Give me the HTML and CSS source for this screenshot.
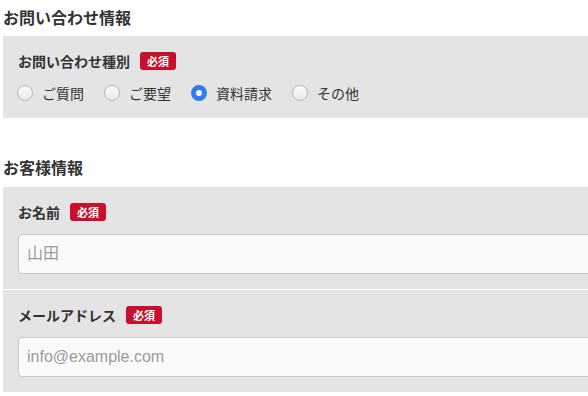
FILE: index.html
```html
<html>
<head>
<meta charset="utf-8">
<link rel="stylesheet" href="styles.css">
</head>
<body>

<div class="formPage">

  <h2 class="sectionTitle">お問い合わせ情報</h2>
  <div class="formBox">
    <div class="formRow">
      <div class="formLabel">お問い合わせ種別 <span class="required">必須</span></div>
      <div class="radioGroup">
        <label class="radioItem"><input type="radio" name="kind"> ご質問</label>
        <label class="radioItem"><input type="radio" name="kind"> ご要望</label>
        <label class="radioItem"><input type="radio" name="kind" checked> 資料請求</label>
        <label class="radioItem"><input type="radio" name="kind"> その他</label>
      </div>
    </div>
  </div>

  <h2 class="sectionTitle second">お客様情報</h2>
  <div class="formBox">
    <div class="formRow">
      <div class="formLabel">お名前 <span class="required">必須</span></div>
      <input class="textInput" type="text" placeholder="山田">
    </div>
    <div class="formRow">
      <div class="formLabel">メールアドレス <span class="required">必須</span></div>
      <input class="textInput" type="text" placeholder="info@example.com">
    </div>
  </div>

</div>

</body>
</html>
```

FILE: styles.css
```css
body {
  margin: 0;
  overflow: hidden;
  background: #ffffff;
  color: #333333;
  font-family: "Noto Sans CJK JP", "Noto Sans", sans-serif;
}

.formPage {
  width: 640px;
  padding: 5px 0 0 3px;
}

.sectionTitle {
  margin: 0 0 7px 0;
  font-size: 16px;
  line-height: 24px;
  font-weight: bold;
  color: #333333;
}

.sectionTitle.second {
  margin-top: 37px;
  margin-bottom: 8px;
}

.formBox {
  background-color: #e4e4e4;
}

.formRow {
  padding: 15px 0 15px 15px;
}

.formRow + .formRow {
  border-top: 1px solid #ffffff;
}

.formLabel {
  display: flex;
  align-items: center;
  height: 20px;
  font-size: 14px;
  font-weight: bold;
  color: #333333;
  margin-bottom: 12px;
}

.required {
  display: inline-block;
  margin-left: 10px;
  padding: 0 7px;
  height: 18px;
  line-height: 18px;
  border-radius: 3px;
  background-color: #c8102e;
  color: #ffffff;
  font-size: 11px;
  font-weight: bold;
}

.radioGroup {
  display: flex;
  align-items: center;
  height: 21px;
  margin-top: -1px;
  margin-left: -1px;
}

.radioItem {
  display: flex;
  align-items: center;
  font-size: 14px;
  color: #333333;
  margin-right: 20px;
}

.radioItem input {
  appearance: none;
  -webkit-appearance: none;
  width: 16px;
  height: 16px;
  margin: 0 9px 0 0;
  border-radius: 50%;
  border: 1px solid #b8b8b8;
  background: linear-gradient(#fdfdfd, #e9e9e9);
  box-sizing: border-box;
}

.radioItem input:checked {
  border: 5px solid #2f7cf0;
  background: #ffffff;
}

.textInput {
  display: block;
  box-sizing: border-box;
  width: 100%;
  height: 40px;
  margin-left: 0;
  padding: 0 8px;
  border: 1px solid #c9c9c9;
  border-radius: 4px;
  background-color: #fafafa;
  font-family: "Liberation Sans", "Noto Sans CJK JP", sans-serif;
  font-size: 16px;
  color: #333333;
}

.textInput::placeholder {
  color: #9a9a9a;
}
```
